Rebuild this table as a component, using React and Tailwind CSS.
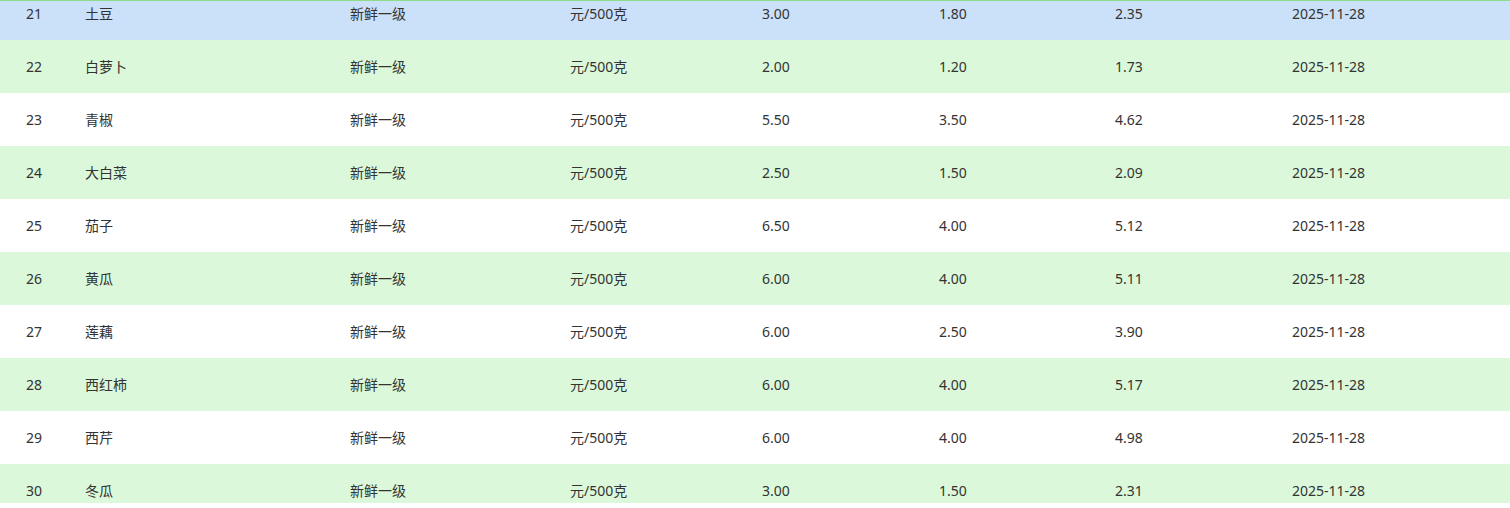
import React, { useLayoutEffect, useRef } from "react";

const rows = [
  ["21", "土豆", "3.00", "1.80", "2.35"],
  ["22", "白萝卜", "2.00", "1.20", "1.73"],
  ["23", "青椒", "5.50", "3.50", "4.62"],
  ["24", "大白菜", "2.50", "1.50", "2.09"],
  ["25", "茄子", "6.50", "4.00", "5.12"],
  ["26", "黄瓜", "6.00", "4.00", "5.11"],
  ["27", "莲藕", "6.00", "2.50", "3.90"],
  ["28", "西红柿", "6.00", "4.00", "5.17"],
  ["29", "西芹", "6.00", "4.00", "4.98"],
  ["30", "冬瓜", "3.00", "1.50", "2.31"],
];

export default function App() {
  const ref = useRef(null);
  useLayoutEffect(() => {
    if (ref.current) ref.current.scrollTop = 14;
  }, []);
  return (
    <div
      className="w-[1510px] h-[508px] bg-white text-[14px] text-[#333]"
      style={{ fontFamily: '"Noto Sans", "Noto Sans CJK SC", sans-serif' }}
    >
      <div className="border-t border-[#8edb8a]">
        <div ref={ref} className="h-[502px] overflow-hidden">
          {rows.map((r, i) => (
            <div
              key={r[0]}
              className={
                "grid grid-cols-[85px_265px_220px_192px_177px_176px_177px_1fr] h-[53px] items-center " +
                (i === 0 ? "bg-[#cbe0f9]" : i % 2 === 1 ? "bg-[#dbf9da]" : "bg-white")
              }
            >
              <div className="pl-[26px]">{r[0]}</div>
              <div>{r[1]}</div>
              <div>新鲜一级</div>
              <div>元/500克</div>
              <div>{r[2]}</div>
              <div>{r[3]}</div>
              <div>{r[4]}</div>
              <div>2025-11-28</div>
            </div>
          ))}
        </div>
      </div>
    </div>
  );
}
